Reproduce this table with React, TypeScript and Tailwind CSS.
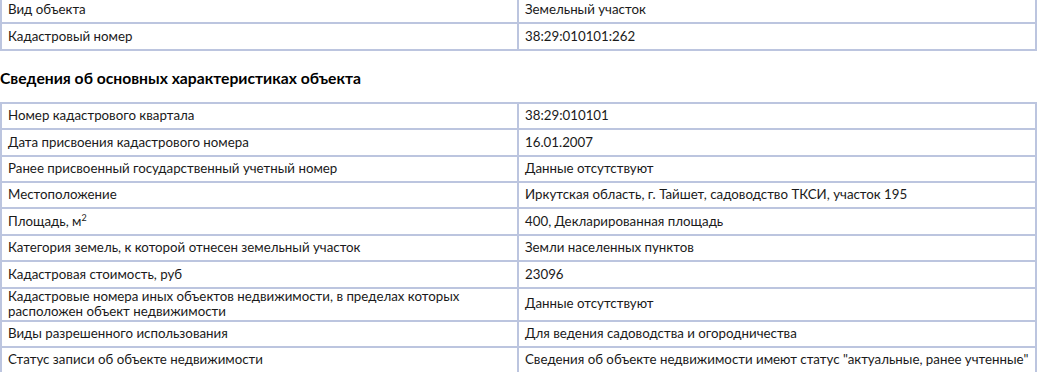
const top = [
  ["Вид объекта", "Земельный участок"],
  ["Кадастровый номер", "38:29:010101:262"],
];

const main: [React.ReactNode, string][] = [
  ["Номер кадастрового квартала", "38:29:010101"],
  ["Дата присвоения кадастрового номера", "16.01.2007"],
  ["Ранее присвоенный государственный учетный номер", "Данные отсутствуют"],
  ["Местоположение", "Иркутская область, г. Тайшет, садоводство ТКСИ, участок 195"],
  [
    <>
      Площадь, м<sup className="text-[9px]">2</sup>
    </>,
    "400, Декларированная площадь",
  ],
  ["Категория земель, к которой отнесен земельный участок", "Земли населенных пунктов"],
  ["Кадастровая стоимость, руб", "23096"],
  [
    "Кадастровые номера иных объектов недвижимости, в пределах которых расположен объект недвижимости",
    "Данные отсутствуют",
  ],
  ["Виды разрешенного использования", "Для ведения садоводства и огородничества"],
  [
    "Статус записи об объекте недвижимости",
    'Сведения об объекте недвижимости имеют статус "актуальные, ранее учтенные"',
  ],
];

function Table({ rows }: { rows: [React.ReactNode, React.ReactNode][] }) {
  return (
    <table className="w-[1037px] border-collapse table-fixed">
      <tbody>
        {rows.map((r, i) => (
          <tr key={i}>
            <td className="w-[517px] h-[26.4px] border-2 border-[#bcc5df] px-[6px] py-0 leading-[15.5px] align-middle">
              <div className="max-w-[480px]">{r[0]}</div>
            </td>
            <td className="h-[26.4px] border-2 border-[#bcc5df] pl-[6px] pr-0 py-0 leading-[15.5px] align-middle whitespace-nowrap">
              {r[1]}
            </td>
          </tr>
        ))}
      </tbody>
    </table>
  );
}

export default function App() {
  return (
    <div className="bg-white w-[1040px] h-[372px] overflow-hidden text-[13.3px] text-[#1a1a1a] font-['Lato',sans-serif]">
      <div className="-mt-[4px]">
        <Table rows={top as [string, string][]} />
      </div>
      <h3 className="font-bold text-[15.7px] text-black pt-[17px] pb-[14px] leading-[20px]">
        Сведения об основных характеристиках объекта
      </h3>
      <Table rows={main} />
    </div>
  );
}
